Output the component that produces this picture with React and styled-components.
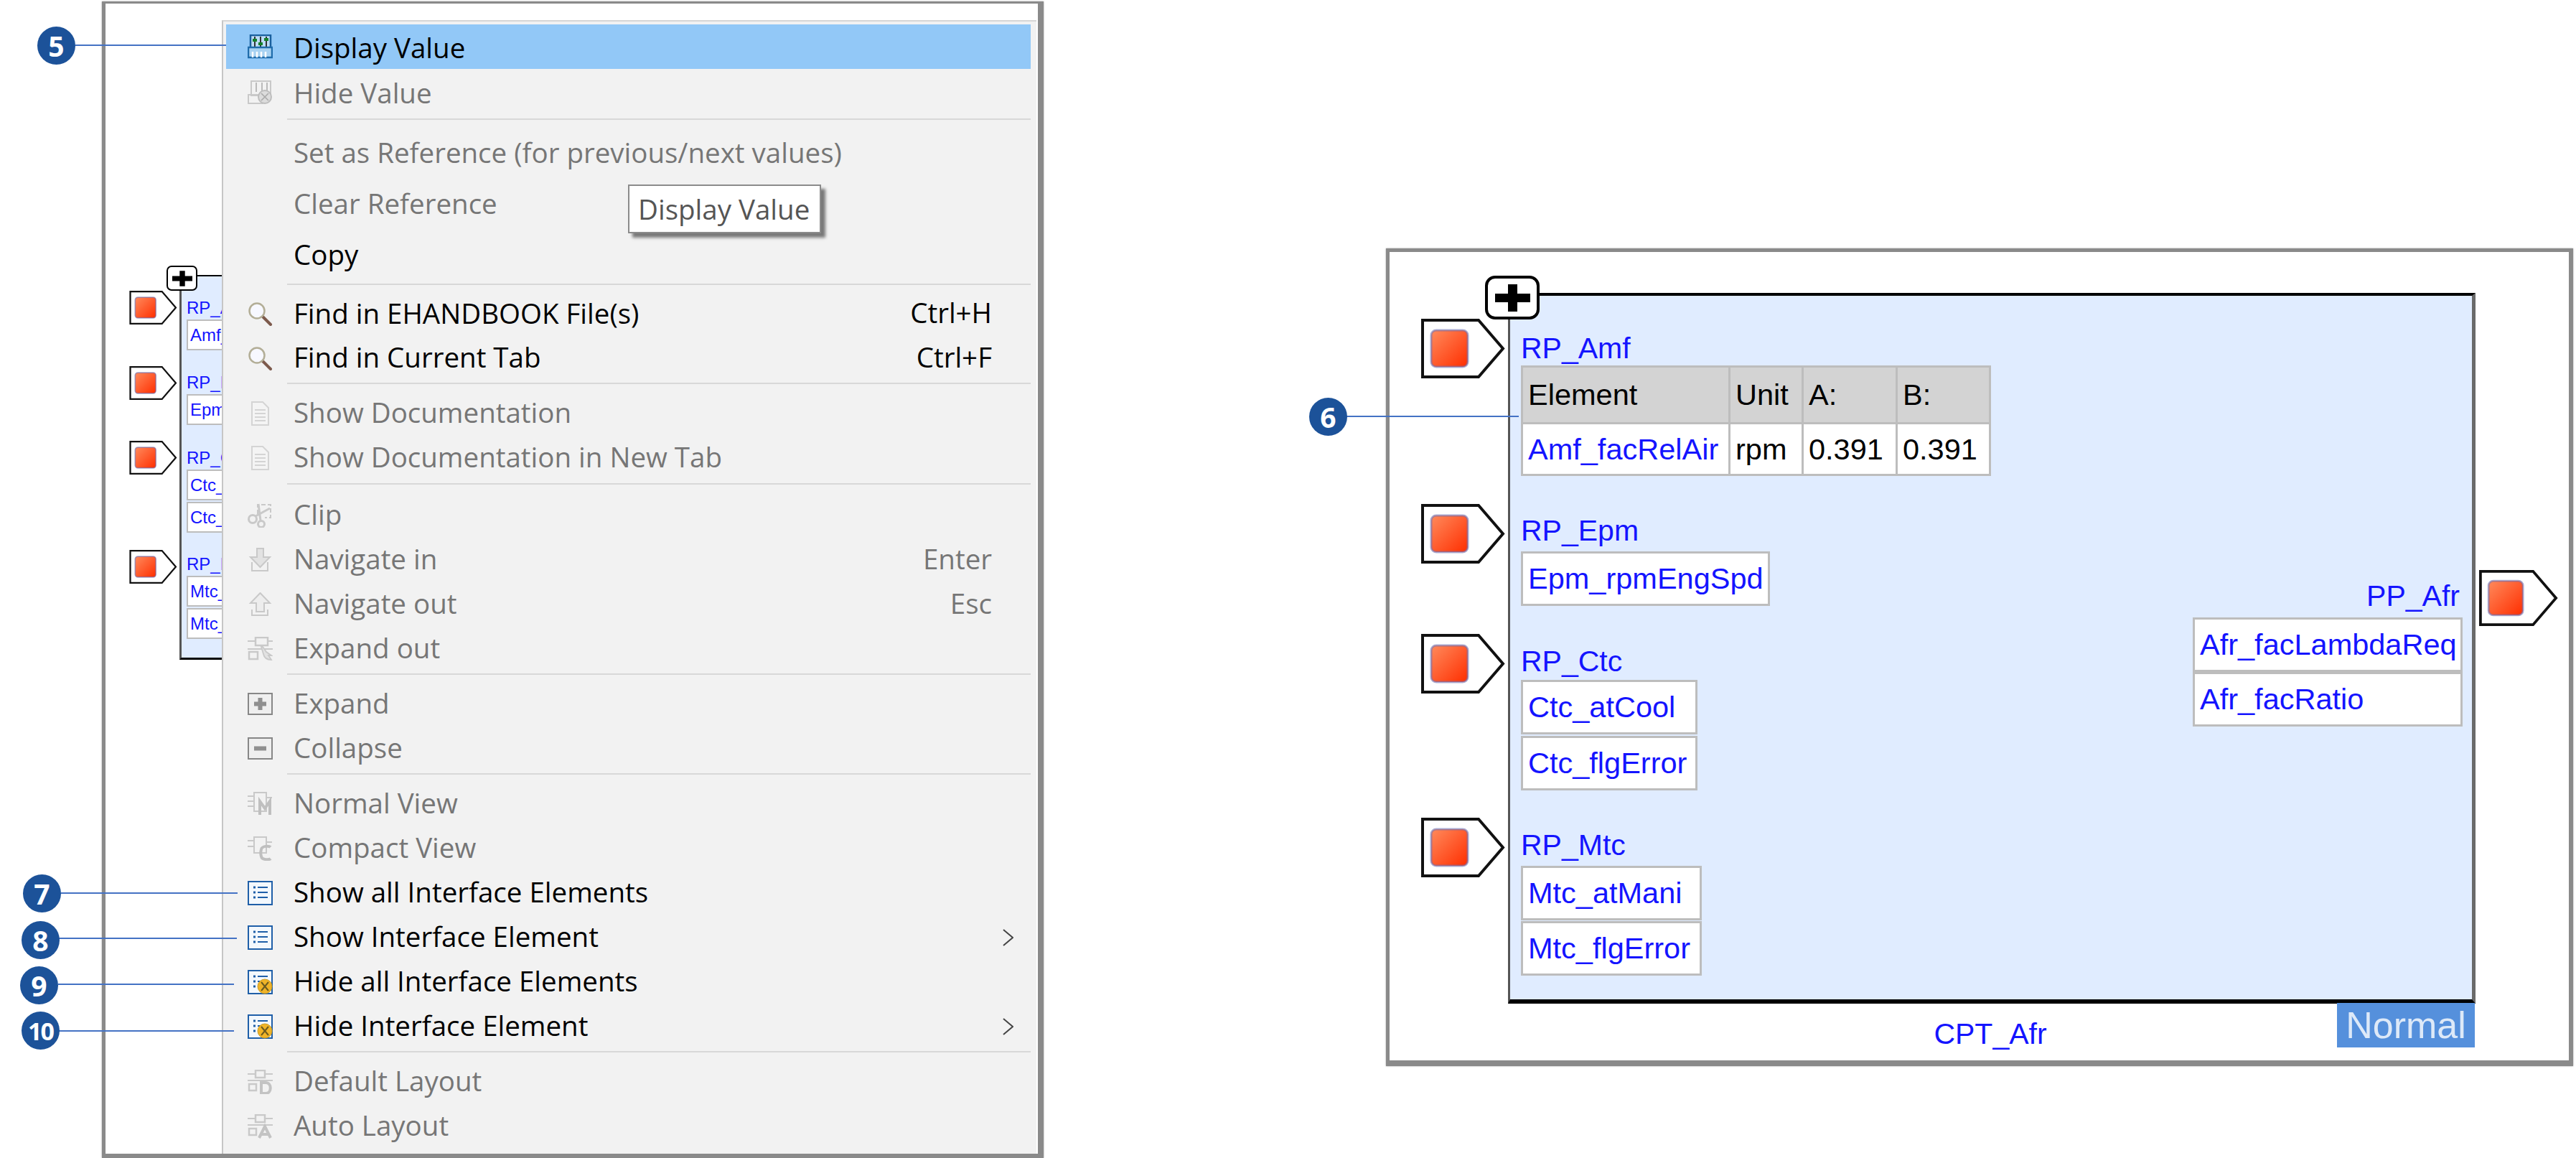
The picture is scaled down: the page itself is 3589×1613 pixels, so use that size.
import React from "react";
import styled, { createGlobalStyle } from "styled-components";

const Global = createGlobalStyle`
  html, body { margin: 0; padding: 0; background: #fff; }
  #root { width: 3589px; height: 1613px; }
`;

const Page = styled.div`
  position: relative;
  display: flex;
  align-items: flex-start;
  width: 3589px;
  height: 1613px;
  overflow: hidden;
  background: #fff;
`;

const Frame = styled.section`
  position: relative;
  box-sizing: border-box;
  flex: none;
  width: ${(p) => p.$w}px;
  height: ${(p) => p.$h}px;
  margin: ${(p) => p.$top}px 0 0 ${(p) => p.$left}px;
  background: #fff;
  border-style: solid;
  border-color: #8a8a8a;
  border-width: ${(p) => p.$borders};
  box-shadow: 0 0 2px rgba(120, 120, 120, 0.7);
`;

/* ---------- context menu ---------- */
const Menu = styled.div`
  position: absolute;
  z-index: 2;
  left: 162px;
  right: 2px;
  top: 23px;
  bottom: 0;
  box-sizing: border-box;
  padding: 4px 8px 0 4px;
  display: flex;
  flex-direction: column;
  background: #f2f2f2;
  border-left: 2px solid #c6c6c6;
  border-top: 2px solid #d6d6d6;
  font-family: "Open Sans", "Liberation Sans", sans-serif;
  font-size: 38.5px;
`;

const Row = styled.div`
  flex: none;
  display: flex;
  align-items: center;
  height: ${(p) => p.$h || 62}px;
  padding: 0 24px 0 30px;
  background: ${(p) => (p.$active ? "#92c8f7" : "transparent")};
  color: ${(p) => (p.$off ? "#767676" : "#000")};
`;

const IconSlot = styled.span`
  flex: none;
  display: flex;
  width: 35px;
  height: 34px;
  margin-right: 29px;
`;

const Label = styled.span`
  flex: 1;
  white-space: nowrap;
  line-height: 1;
  margin-bottom: ${(p) => p.$lift}px;
`;

const Shortcut = styled.span`
  flex: none;
  margin-right: 30px;
  margin-bottom: 3px;
  white-space: nowrap;
  line-height: 1;
  color: ${(p) => (p.$off ? "#767676" : "#000")};
`;

const Sep = styled.div`
  flex: none;
  height: 2px;
  margin: ${(p) => p.$before ?? 3}px 0 ${(p) => p.$after ?? 10}px 85px;
  background: #d8d8d8;
`;

const Tooltip = styled.div`
  position: absolute;
  left: 564px;
  top: 227px;
  box-sizing: border-box;
  width: 269px;
  height: 68px;
  padding-left: 12px;
  display: flex;
  align-items: center;
  white-space: nowrap;
  background: #fff;
  color: #555;
  border: 2px solid #8b8b8b;
  box-shadow: 6px 6px 4px rgba(0, 0, 0, 0.5);
`;

/* ---------- block diagram ---------- */
const Block = styled.div`
  position: absolute;
  box-sizing: border-box;
  left: ${(p) => p.$x}px;
  top: ${(p) => p.$y}px;
  width: ${(p) => p.$w}px;
  height: ${(p) => p.$h}px;
  display: flex;
  justify-content: space-between;
  overflow: hidden;
  background: #e0ecff;
  border-style: solid;
  border-color: #000 #6a6a6a #000 #555;
  border-width: ${(p) => p.$borders};
  font-family: "Liberation Sans", Arial, sans-serif;
  color: #1414ff;
`;

const InColumn = styled.div`
  display: flex;
  flex-direction: column;
  padding: ${(p) => p.$top}px 0 0 ${(p) => p.$left}px;
`;

const OutColumn = styled.div`
  display: flex;
  flex-direction: column;
  align-items: flex-end;
  padding: 394px 13px 0 0;
`;

const Section = styled.div`
  display: flex;
  flex-direction: column;
  align-items: flex-start;
  margin-top: ${(p) => p.$gap || 0}px;
`;

const PortName = styled.div`
  font-size: ${(p) => p.$size}px;
  line-height: ${(p) => p.$line}px;
  height: ${(p) => p.$line}px;
  margin-bottom: ${(p) => p.$below}px;
  padding-right: ${(p) => p.$right || 0}px;
  white-space: nowrap;
`;

const Field = styled.div`
  box-sizing: border-box;
  flex: none;
  display: flex;
  align-items: center;
  width: ${(p) => p.$w}px;
  height: ${(p) => p.$h}px;
  margin-bottom: ${(p) => p.$gap || 0}px;
  padding-left: ${(p) => p.$pad}px;
  font-size: ${(p) => p.$size}px;
  white-space: nowrap;
  overflow: hidden;
  background: #fff;
  border: ${(p) => p.$line}px solid #bdbdbd;
`;

const ValueTable = styled.div`
  display: grid;
  grid-template-columns: 286px 99px 128px 127px;
  grid-template-rows: 76px 69px;
  gap: 3px;
  padding: 3px;
  background: #bdbdbd;
`;

const Cell = styled.div`
  display: flex;
  align-items: center;
  padding-left: ${(p) => p.$pad || 7}px;
  white-space: nowrap;
  background: ${(p) => (p.$head ? "#d3d3d3" : "#fff")};
  color: ${(p) => (p.$blue ? "#1414ff" : "#000")};
  font-size: 41.5px;
`;

const Node = styled.svg`
  position: absolute;
  display: block;
  left: ${(p) => p.$x}px;
  top: ${(p) => p.$y}px;
`;

const PlusBox = styled.div`
  position: absolute;
  z-index: 1;
  box-sizing: border-box;
  left: ${(p) => p.$x}px;
  top: ${(p) => p.$y}px;
  width: ${(p) => p.$w}px;
  height: ${(p) => p.$h}px;
  display: flex;
  align-items: center;
  justify-content: center;
  background: #fff;
  border: ${(p) => p.$line}px solid #000;
  border-radius: ${(p) => p.$radius}px;
`;

const Caption = styled.div`
  position: absolute;
  left: 737px;
  top: 1065px;
  width: 200px;
  text-align: center;
  font: 41px/48px "Liberation Sans", Arial, sans-serif;
  color: #1414ff;
`;

const ViewBadge = styled.div`
  position: absolute;
  left: 1320px;
  top: 1046px;
  width: 192px;
  height: 62px;
  display: flex;
  align-items: center;
  justify-content: center;
  background: #5590dc;
  color: #dde9f8;
  font: 52px/1 "Liberation Sans", Arial, sans-serif;
`;

/* ---------- callouts ---------- */
const Badge = styled.div`
  position: absolute;
  z-index: 5;
  left: ${(p) => p.$x}px;
  top: ${(p) => p.$y}px;
  width: 53px;
  height: 53px;
  display: flex;
  align-items: center;
  justify-content: center;
  border-radius: 50%;
  background: #1c5299;
  color: #fff;
  font: 700 ${(p) => p.$size || 39}px/1 "Open Sans", "Liberation Sans", sans-serif;
  letter-spacing: ${(p) => p.$track || 0}px;
`;

const Leader = styled.div`
  position: absolute;
  z-index: 4;
  left: ${(p) => p.$x}px;
  top: ${(p) => p.$y}px;
  width: ${(p) => p.$w}px;
  height: 2px;
  background: #4472c4;
`;

/* ---------- drawings ---------- */
const Ico = ({ children }) => (
  <svg width="35" height="34" viewBox="0 0 35 34" fill="none">
    {children}
  </svg>
);

const G = "#c9c9c9";

const icons = {
  display: (
    <Ico>
      <rect x="4" y="1" width="28" height="22" fill="#bcdcf6" stroke="#1a5f9e" strokeWidth="2.5" />
      <path d="M10 3v14M18 3v14M26 3v14" stroke="#222" strokeWidth="1.8" />
      <rect x="7" y="6" width="6" height="4" fill="#14802a" />
      <rect x="15" y="11" width="6" height="4" fill="#14802a" />
      <rect x="23" y="5" width="6" height="4" fill="#14802a" />
      <rect x="1" y="18" width="33" height="14" fill="#a8d2f2" stroke="#1f6cab" strokeWidth="2.5" />
      <path d="M7 24v8M13 24v8M19 24v8M25 24v8" stroke="#fff" strokeWidth="2.5" />
    </Ico>
  ),
  hide: (
    <Ico>
      <rect x="5" y="1" width="27" height="20" stroke={G} strokeWidth="2" />
      <path d="M12 3v13M20 3v13M27 3v13" stroke="#a8a8a8" strokeWidth="1.5" />
      <rect x="1" y="20" width="20" height="12" stroke={G} strokeWidth="2" />
      <circle cx="24" cy="23" r="9" fill="#dcdcdc" stroke="#bdbdbd" strokeWidth="2" />
      <path d="M19 18l10 10M29 18l-10 10" stroke="#aaa" strokeWidth="1.6" />
    </Ico>
  ),
  find: (
    <Ico>
      <path d="M21 21l11 11" stroke="#7d5a4c" strokeWidth="4" strokeLinecap="round" />
      <circle cx="13" cy="13" r="10.5" fill="#f7f8ff" stroke="#b3ae97" strokeWidth="2.5" />
    </Ico>
  ),
  doc: (
    <Ico>
      <path d="M6 1h15l8 8v24H6z" fill="#f4f4f4" stroke="#d4d4d4" strokeWidth="2" />
      <path d="M10 12h15M10 17h15M10 22h15M10 27h15" stroke="#d4d4d4" strokeWidth="2" />
    </Ico>
  ),
  clip: (
    <Ico>
      <path d="M14 15V2h18v18H24" stroke={G} strokeWidth="2" strokeDasharray="6 3" />
      <circle cx="7" cy="22" r="5.5" stroke={G} strokeWidth="3" />
      <circle cx="19" cy="29" r="4.5" stroke={G} strokeWidth="3" />
      <path d="M11 18L31 7M18 24L15 1" stroke={G} strokeWidth="3" />
    </Ico>
  ),
  navIn: (
    <Ico>
      <path d="M13 1h9v12h9L17.5 27 4 13h9z" fill="#e2e2e2" stroke={G} strokeWidth="2" />
      <path d="M6 20v12h22V20" stroke={G} strokeWidth="2" />
    </Ico>
  ),
  navOut: (
    <Ico>
      <path d="M17.5 1L31 15h-8v12h-11V15H4z" fill="#ededed" stroke={G} strokeWidth="2" />
      <path d="M6 24v8h22v-8" stroke={G} strokeWidth="2" />
    </Ico>
  ),
  expandOut: (
    <Ico>
      <rect x="11" y="1" width="17" height="11" stroke={G} strokeWidth="2.5" />
      <path d="M0 6h11M28 6h7M0 17h35" stroke={G} strokeWidth="2" />
      <rect x="2" y="21" width="12" height="10" stroke={G} strokeWidth="2.5" />
      <path d="M19 14l3 10c1 5 5 8 11 8l-4-6h4l-7-5-5-7z" fill="#e2e2e2" stroke={G} strokeWidth="1.8" />
    </Ico>
  ),
  plus: (
    <Ico>
      <rect x="1" y="2" width="33" height="29" fill="#efefef" stroke="#878787" strokeWidth="2" />
      <path d="M17.5 8v17M9 16.5h17" stroke="#8f8f8f" strokeWidth="6" />
    </Ico>
  ),
  minus: (
    <Ico>
      <rect x="1" y="2" width="33" height="29" fill="#efefef" stroke="#878787" strokeWidth="2" />
      <path d="M9 16.5h17" stroke="#8f8f8f" strokeWidth="6" />
    </Ico>
  ),
  normal: (
    <Ico>
      <rect x="9" y="1" width="17" height="26" stroke={G} strokeWidth="2" />
      <path d="M0 6h9M0 13h9M0 20h9M26 8h8" stroke={G} strokeWidth="2" />
      <path d="M17 32V13l7 10 7-10v19" stroke="#bfbfbf" strokeWidth="4" />
    </Ico>
  ),
  compact: (
    <Ico>
      <rect x="9" y="1" width="17" height="22" stroke={G} strokeWidth="2" />
      <path d="M0 6h9M0 14h9M26 8h8" stroke={G} strokeWidth="2" />
      <path d="M32 15c-2-2-12-2-13 3-1 4-1 7 0 10 1 5 11 5 13 3" stroke="#bfbfbf" strokeWidth="4" />
    </Ico>
  ),
  list: (
    <Ico>
      <rect x="1" y="1" width="33" height="32" fill="#f3f8fd" stroke="#1f5fa8" strokeWidth="2" />
      <path d="M8 9h3M8 16h3M8 23h3" stroke="#1f5fa8" strokeWidth="3" />
      <path d="M14 9h14M14 16h14M14 23h14" stroke="#1f5fa8" strokeWidth="2" />
    </Ico>
  ),
  listHide: (
    <Ico>
      <rect x="1" y="1" width="33" height="32" fill="#f3f8fd" stroke="#1f5fa8" strokeWidth="2" />
      <path d="M8 9h3M8 16h3M8 23h3" stroke="#1f5fa8" strokeWidth="3" />
      <path d="M14 9h14M14 16h5" stroke="#1f5fa8" strokeWidth="2" />
      <circle cx="24" cy="23" r="10" fill="#f0b428" stroke="#c99a22" strokeWidth="1" />
      <path d="M19 17l10 12M29 17l-10 12" stroke="#6b5a20" strokeWidth="2" />
    </Ico>
  ),
  layoutD: (
    <Ico>
      <rect x="11" y="1" width="13" height="10" stroke={G} strokeWidth="2.5" />
      <path d="M0 6h11M24 6h11M0 15h35" stroke={G} strokeWidth="2" />
      <rect x="2" y="20" width="10" height="9" stroke={G} strokeWidth="2.5" />
      <path d="M19 18h6c9 0 9 15 0 15h-6z" stroke="#c3c3c3" strokeWidth="4" />
    </Ico>
  ),
  layoutA: (
    <Ico>
      <rect x="11" y="1" width="13" height="10" stroke={G} strokeWidth="2.5" />
      <path d="M0 6h11M24 6h11M0 15h35" stroke={G} strokeWidth="2" />
      <rect x="2" y="20" width="10" height="9" stroke={G} strokeWidth="2.5" />
      <path d="M16 33l8-16 8 16M19 28h10" stroke="#c3c3c3" strokeWidth="4" />
    </Ico>
  ),
};

const Chevron = () => (
  <svg width="15" height="24" viewBox="0 0 15 24" fill="none">
    <path d="M1 1l13 11L1 23" stroke="#444" strokeWidth="2" />
  </svg>
);

const Port = ({ x, y, w = 117, h = 83 }) => (
  <Node $x={x} $y={y} width={w} height={h} viewBox="0 0 117 83" fill="none">
    <defs>
      <linearGradient id="portRed" x1="0" y1="0" x2="1" y2="1">
        <stop offset="0" stopColor="#ff8a5c" />
        <stop offset="1" stopColor="#ff2e00" />
      </linearGradient>
    </defs>
    <path d="M2 2h78l34 39.5L80 81H2z" fill="#fff" stroke="#111" strokeWidth="4" />
    <rect x="14" y="16" width="51" height="51" rx="7" fill="url(#portRed)" stroke="#6f6fb0" strokeOpacity="0.6" strokeWidth="3" />
  </Node>
);

const PlusMark = ({ w, h }) => (
  <svg width={w} height={h} viewBox="0 0 49 38">
    <path d="M18 0h13v13h18v12H31v13H18V25H0V13h18z" fill="#000" />
  </svg>
);

const Item = ({ icon, text, off, active, h, shortcut, more, lift = 3 }) => (
  <Row $off={off} $active={active} $h={h}>
    <IconSlot>{icon && icons[icon]}</IconSlot>
    <Label $lift={lift}>{text}</Label>
    {shortcut && <Shortcut $off={off}>{shortcut}</Shortcut>}
    {more && <Chevron />}
  </Row>
);

const smallField = { $w: 62, $h: 43, $pad: 3, $size: 24, $line: 2 };
const smallName = { $size: 24, $line: 28, $below: 2 };
const bigName = { $size: 41, $line: 48 };
const bigField = { $h: 76, $pad: 7, $size: 41.5, $line: 3 };

const callouts = [
  { n: "5", x: 52, y: 37, lx: 105, ly: 62, lw: 210 },
  { n: "6", x: 1824, y: 554, lx: 1876, ly: 579, lw: 240 },
  { n: "7", x: 32, y: 1218, lx: 85, ly: 1243, lw: 246 },
  { n: "8", x: 30, y: 1283, lx: 82, ly: 1306, lw: 248 },
  { n: "9", x: 28, y: 1346, lx: 81, ly: 1370, lw: 245 },
  { n: "10", x: 30, y: 1409, lx: 82, ly: 1435, lw: 244, size: 34, track: -2 },
];

export default function App() {
  return (
    <Page>
      <Global />

      <Frame $left={142} $top={2} $w={1312} $h={1611} $borders="3px 8px 6px 5px">
        <Port x={33} y={400} w={67} h={47} />
        <Port x={33} y={505} w={67} h={47} />
        <Port x={33} y={609} w={67} h={47} />
        <Port x={33} y={761} w={67} h={47} />
        <PlusBox $x={85} $y={365} $w={43} $h={35} $line={2} $radius={7}>
          <PlusMark w={28} h={22} />
        </PlusBox>
        <Block $x={103} $y={378} $w={70} $h={536} $borders="2px 0 3px 3px">
          <InColumn $top={30} $left={7}>
            <Section>
              <PortName {...smallName}>RP_Amf</PortName>
              <Field {...smallField}>Amf_facRelAir</Field>
            </Section>
            <Section $gap={31}>
              <PortName {...smallName}>RP_Epm</PortName>
              <Field {...smallField}>Epm_rpmEngSpd</Field>
            </Section>
            <Section $gap={32}>
              <PortName {...smallName}>RP_Ctc</PortName>
              <Field {...smallField} $gap={2}>Ctc_atCool</Field>
              <Field {...smallField}>Ctc_flgError</Field>
            </Section>
            <Section $gap={30}>
              <PortName {...smallName}>RP_Mtc</PortName>
              <Field {...smallField} $gap={2}>Mtc_atMani</Field>
              <Field {...smallField}>Mtc_flgError</Field>
            </Section>
          </InColumn>
        </Block>

        <Menu>
          <Item icon="display" text="Display Value" active lift={-2} />
          <Item icon="hide" text="Hide Value" off h={66} lift={0} />
          <Sep $after={9} />
          <Item text="Set as Reference (for previous/next values)" off h={72} lift={0} />
          <Item text="Clear Reference" off h={72} lift={1} />
          <Item text="Copy" h={72} />
          <Sep $after={9} />
          <Item icon="find" text="Find in EHANDBOOK File(s)" shortcut="Ctrl+H" lift={1} />
          <Item icon="find" text="Find in Current Tab" shortcut="Ctrl+F" />
          <Sep />
          <Item icon="doc" text="Show Documentation" off />
          <Item icon="doc" text="Show Documentation in New Tab" off />
          <Sep $before={4} $after={12} />
          <Item icon="clip" text="Clip" off />
          <Item icon="navIn" text="Navigate in" off shortcut="Enter" />
          <Item icon="navOut" text="Navigate out" off shortcut="Esc" />
          <Item icon="expandOut" text="Expand out" off />
          <Sep />
          <Item icon="plus" text="Expand" off />
          <Item icon="minus" text="Collapse" off />
          <Sep />
          <Item icon="normal" text="Normal View" off />
          <Item icon="compact" text="Compact View" off />
          <Item icon="list" text="Show all Interface Elements" />
          <Item icon="list" text="Show Interface Element" more />
          <Item icon="listHide" text="Hide all Interface Elements" />
          <Item icon="listHide" text="Hide Interface Element" more />
          <Sep />
          <Item icon="layoutD" text="Default Layout" off />
          <Item icon="layoutA" text="Auto Layout" off />
          <Tooltip>Display Value</Tooltip>
        </Menu>
      </Frame>

      <Frame $left={477} $top={346} $w={1654} $h={1139} $borders="5px 6px 8px 5px">
        <Port x={44} y={93} />
        <Port x={44} y={351} />
        <Port x={44} y={532} />
        <Port x={44} y={788} />
        <Port x={1513} y={443} w={120} h={78} />
        <PlusBox $x={133} $y={33} $w={76} $h={61} $line={4} $radius={14}>
          <PlusMark w={49} h={38} />
        </PlusBox>
        <Block $x={165} $y={57} $w={1348} $h={990} $borders="4px 5px 6px 3px">
          <InColumn $top={49} $left={15}>
            <Section>
              <PortName {...bigName} $below={0}>RP_Amf</PortName>
              <ValueTable>
                <Cell $head>Element</Cell>
                <Cell $head>Unit</Cell>
                <Cell $head>A:</Cell>
                <Cell $head>B:</Cell>
                <Cell $blue>Amf_facRelAir</Cell>
                <Cell>rpm</Cell>
                <Cell>0.391</Cell>
                <Cell>0.391</Cell>
              </ValueTable>
            </Section>
            <Section $gap={52}>
              <PortName {...bigName} $below={5}>RP_Epm</PortName>
              <Field {...bigField} $w={347}>Epm_rpmEngSpd</Field>
            </Section>
            <Section $gap={53}>
              <PortName {...bigName} $below={2}>RP_Ctc</PortName>
              <Field {...bigField} $w={246} $gap={2}>Ctc_atCool</Field>
              <Field {...bigField} $w={246}>Ctc_flgError</Field>
            </Section>
            <Section $gap={52}>
              <PortName {...bigName} $below={5}>RP_Mtc</PortName>
              <Field {...bigField} $w={252} $gap={1}>Mtc_atMani</Field>
              <Field {...bigField} $w={252}>Mtc_flgError</Field>
            </Section>
          </InColumn>
          <OutColumn>
            <PortName {...bigName} $below={6} $right={4}>PP_Afr</PortName>
            <Field {...bigField} $w={376}>Afr_facLambdaReq</Field>
            <Field {...bigField} $w={376}>Afr_facRatio</Field>
          </OutColumn>
        </Block>
        <Caption>CPT_Afr</Caption>
        <ViewBadge>Normal</ViewBadge>
      </Frame>

      {callouts.map((c) => (
        <React.Fragment key={c.n}>
          <Badge $x={c.x} $y={c.y} $size={c.size} $track={c.track}>{c.n}</Badge>
          <Leader $x={c.lx} $y={c.ly} $w={c.lw} />
        </React.Fragment>
      ))}
    </Page>
  );
}
